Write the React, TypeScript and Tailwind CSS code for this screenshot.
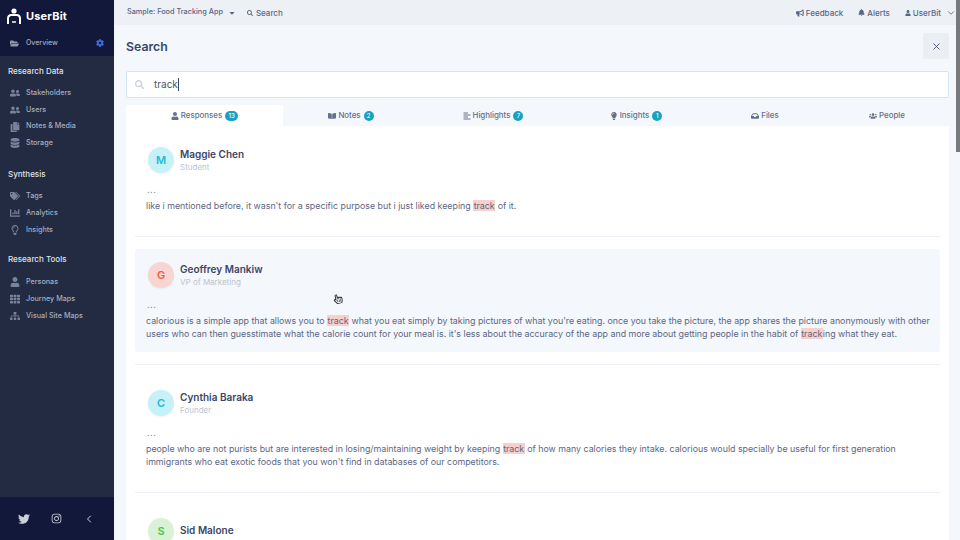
import React from "react";
import {
  FaFolderOpen, FaCog, FaUserFriends, FaCopy, FaDatabase, FaTags, FaChartBar, FaRegLightbulb, FaUser,
  FaTh, FaSitemap, FaTwitter, FaInstagram, FaCaretDown, FaSearch, FaBullhorn,
  FaBell, FaBookOpen, FaAlignLeft, FaLightbulb, FaInbox, FaUsers, FaRegHandPointer,
} from "react-icons/fa";
import { X, ChevronLeft, ChevronDown } from "lucide-react";

const sections = [
  { title: "Research Data", pt: "pt-[8px]", mt: "mt-[7px]", row: "h-[16.700px]", items: [["Stakeholders", FaUserFriends], ["Users", FaUserFriends], ["Notes & Media", FaCopy], ["Storage", FaDatabase]] },
  { title: "Synthesis", pt: "pt-[15px]", mt: "mt-[7px]", row: "h-[17px]", items: [["Tags", FaTags], ["Analytics", FaChartBar], ["Insights", FaRegLightbulb]] },
  { title: "Research Tools", pt: "pt-[13px]", mt: "mt-[8px]", row: "h-[17px]", items: [["Personas", FaUser], ["Journey Maps", FaTh], ["Visual Site Maps", FaSitemap]] },
] as const;

const tabs = [
  { label: "Responses", icon: FaUser, count: "13", w: "w-[157px]", active: true },
  { label: "Notes", icon: FaBookOpen, count: "2", w: "w-[136px]" },
  { label: "Highlights", icon: FaAlignLeft, count: "7", w: "w-[148px]" },
  { label: "Insights", icon: FaLightbulb, count: "1", w: "w-[138px]" },
  { label: "Files", icon: FaInbox, w: "w-[120px]" },
  { label: "People", icon: FaUsers, w: "w-[124px]" },
];

const Mark = ({ children }: { children: React.ReactNode }) => (
  <mark className="bg-[#f7cfcb] text-[#5d6785] px-[0.5px]">{children}</mark>
);

const people = [
  {
    name: "Maggie Chen", role: "Student", letter: "M", avatar: "bg-[#c5f1f7] text-[#1cb9d8]",
    body: <>like i mentioned before, it wasn't for a specific purpose but i just liked keeping <Mark>track</Mark> of it.</>,
  },
  {
    name: "Geoffrey Mankiw", role: "VP of Marketing", letter: "G", avatar: "bg-[#f8d5d0] text-[#ee5a44]", hover: true,
    body: <>calorious is a simple app that allows you to <Mark>track</Mark> what you eat simply by taking pictures of what you're eating. once you take the picture, the app shares the picture anonymously with other users who can then guesstimate what the calorie count for your meal is. it's less about the accuracy of the app and more about getting people in the habit of <Mark>track</Mark>ing what they eat.</>,
  },
  {
    name: "Cynthia Baraka", role: "Founder", letter: "C", avatar: "bg-[#c5f1f7] text-[#1cb9d8]",
    body: <>people who are not purists but are interested in losing/maintaining weight by keeping <Mark>track</Mark> of how many calories they intake. calorious would specially be useful for first generation immigrants who eat exotic foods that you won't find in databases of our competitors.</>,
  },
  {
    name: "Sid Malone", role: "", letter: "S", avatar: "bg-[#d9f2d6] text-[#56c04f]", body: null,
  },
];

export default function App() {
  return (
    <div className="relative flex h-[540px] w-[960px] overflow-hidden bg-[#f4f7fb] font-['Inter',sans-serif]">
      <aside className="flex h-full w-[114px] shrink-0 flex-col bg-[#222b42] text-[#aeb6c8]">
        <div className="h-[56px] shrink-0 bg-[#12183a] pl-[7px] pr-[10px]">
          <div className="flex h-[29px] items-center gap-[5px] pt-[3px]">
            <svg width="14" height="17" viewBox="0 0 14 17" fill="none" className="text-white">
              <circle cx="7" cy="3" r="2.6" fill="currentColor" />
              <path d="M1 16V10.500C1 8.500 2.500 7 4.500 7h5C11.500 7 13 8.500 13 10.500V16" stroke="currentColor" strokeWidth="2" />
              <path d="M5 14h4" stroke="currentColor" strokeWidth="1.500" />
            </svg>
            <span className="text-[11px] font-bold tracking-[0.2px] text-white">UserBit</span>
          </div>
          <div className="mt-[6px] flex h-[16px] items-center">
            <FaFolderOpen className="ml-[3px] size-[9px] text-[#8d97ad]" />
            <span className="ml-[7px] text-[7px] font-medium text-[#a5adc0]">Overview</span>
            <FaCog className="ml-auto size-[8px] text-[#3f6fe8]" />
          </div>
        </div>
        <nav className="flex-1 pl-[8px]">
          {sections.map((s) => (
            <div key={s.title} className={s.pt}>
              <div className="flex h-[14px] items-center text-[8px] font-medium text-[#dfe3ea]">{s.title}</div>
              <div className={`flex flex-col ${s.mt}`}>
                {s.items.map(([label, Icon]) => (
                  <div key={label} className={`flex items-center ${s.row}`}>
                    <span className="flex w-[18px] justify-start pl-[2px]">
                      <Icon className="size-[10px] text-[#78839b]" />
                    </span>
                    <span className="text-[7.200px] font-medium text-[#a5adc0]">{label}</span>
                  </div>
                ))}
              </div>
            </div>
          ))}
        </nav>
        <div className="flex h-[43px] shrink-0 items-center bg-[#12183a] pl-[18px] text-[#c9cfdb]">
          <FaTwitter className="size-[12px]" />
          <FaInstagram className="ml-[21px] size-[11px]" />
          <ChevronLeft className="ml-[21px] size-[12px]" strokeWidth={2} />
        </div>
      </aside>

      <main className="flex min-w-0 flex-1 flex-col">
        <header className="flex h-[25px] shrink-0 items-center bg-[#edf1f6] pl-[13px] pr-[4px] text-[8px] font-medium text-[#5a6684]">
          <span className="text-[7.300px]">Sample: Food Tracking App</span>
          <FaCaretDown className="ml-[5px] size-[8px]" />
          <FaSearch className="ml-[11px] size-[6px]" />
          <span className="ml-[3px]">Search</span>
          <FaBullhorn className="ml-auto size-[8px]" />
          <span className="ml-[2px]">Feedback</span>
          <FaBell className="ml-[15px] size-[7px]" />
          <span className="ml-[2px]">Alerts</span>
          <FaUser className="ml-[15px] size-[6px]" />
          <span className="ml-[2px]">UserBit</span>
          <ChevronDown className="ml-[5px] size-[10px]" strokeWidth={2} />
        </header>

        <div className="flex items-center justify-between pl-[12px] pr-[11px] pt-[8px]">
          <h1 className="pt-[2px] text-[12.300px] font-semibold text-[#3a4668]">Search</h1>
          <button className="flex size-[26px] items-center justify-center rounded-[2px] bg-[#ebeff4] text-[#3a4668]">
            <X className="size-[11px]" strokeWidth={1.800} />
          </button>
        </div>

        <div className="ml-[12px] mr-[11px] mt-[12px] flex h-[27px] items-center rounded-[2px] border border-[#d2e7f3] bg-white pl-[8px]">
          <FaSearch className="size-[9px] text-[#ccd3dd]" />
          <span className="ml-[10px] text-[10px] text-[#4a5470]">track</span>
          <span className="h-[13px] w-px bg-[#3a4668]" />
        </div>

        <div className="ml-[12px] mr-[11px] mt-[7px] flex h-[21px] shrink-0">
          {tabs.map((t) => (
            <div key={t.label} className={`flex items-center justify-center gap-[2px] text-[7.900px] font-medium text-[#65708c] ${t.w} ${t.active ? "bg-white text-[#4a5573]" : "pt-[1px]"}`}>
              <t.icon className="size-[8px]" />
              <span>{t.label}</span>
              {t.count && (
                <span className={`ml-[1px] flex h-[10px] items-center justify-center rounded-full bg-[#16a3c2] text-[6px] leading-none text-white ${t.count.length > 1 ? "w-[13px]" : "w-[10px]"}`}>
                  {t.count}
                </span>
              )}
            </div>
          ))}
        </div>

        <div className="ml-[12px] mr-[11px] min-h-0 flex-1 overflow-hidden bg-white px-[9px] pt-[8px]">
          {people.map((p, i) => (
            <React.Fragment key={p.name}>
              {i > 0 && <div className="my-[12px] h-px bg-[#eef1f5]" />}
              <article className={`rounded-[3px] pb-[12px] pl-[11px] pr-[8px] pt-[13px] ${p.hover ? "bg-[#f4f7fb]" : ""}`}>
                <div className="flex h-[26px] items-center">
                  <div className={`ml-[2px] flex size-[26px] shrink-0 items-center justify-center rounded-full text-[11px] font-semibold shadow-[0_1px_2px_rgba(0,0,0,0.06)] ${p.avatar}`}>
                    {p.letter}
                  </div>
                  <div className={`ml-[6px] flex flex-col ${p.role ? "pt-[2px]" : "pb-[2px]"}`}>
                    <span className="text-[10px] font-semibold leading-[13px] text-[#3a4668]">{p.name}</span>
                    {p.role && <span className="text-[8px] leading-[13px] text-[#bcc4d2]">{p.role}</span>}
                  </div>
                </div>
                {p.body && (
                  <>
                    <div className="mt-[10px] h-[16px] pl-[1px] text-[9px] leading-[13px] tracking-[0.5px] text-[#8a93a8]">...</div>
                    <p className="m-0 text-[8.840px] leading-[13px] text-[#5d6785]">{p.body}</p>
                  </>
                )}
              </article>
            </React.Fragment>
          ))}
        </div>
      </main>

      <div className="absolute right-0 top-0 h-[152px] w-[4px] bg-[#77797c]" />
      <FaRegHandPointer className="absolute left-[333px] top-[294px] size-[10px] -rotate-12 text-[#2d2d2d]" />
    </div>
  );
}
